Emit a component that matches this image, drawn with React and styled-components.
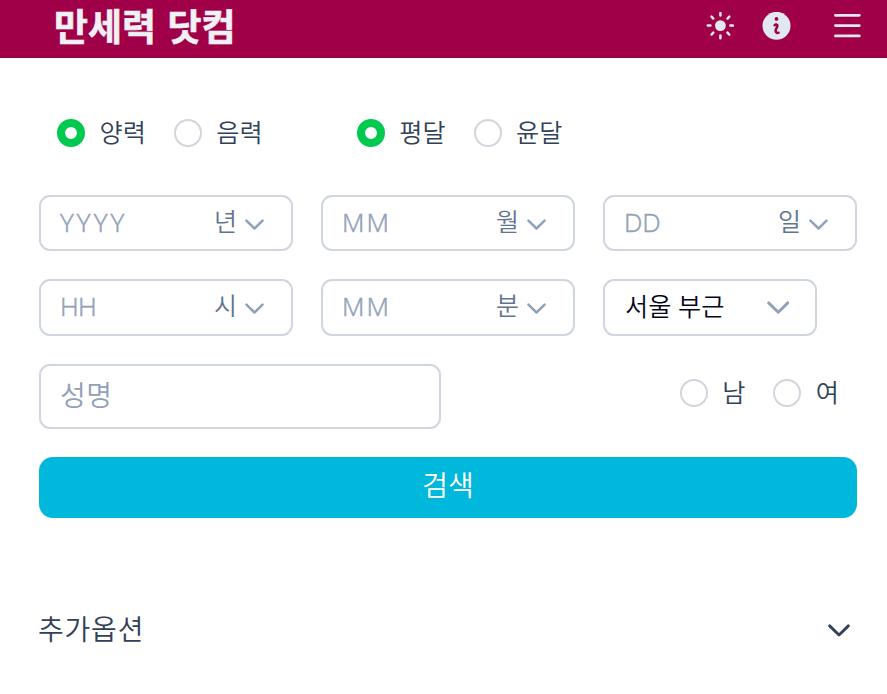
import React, { useState } from "react";
import styled, { createGlobalStyle } from "styled-components";

const GlobalStyle = createGlobalStyle`
  * {
    box-sizing: border-box;
  }

  body {
    margin: 0;
    background: #fff;
    color: #314158;
    font-family: "Noto Sans CJK KR", "Noto Sans", sans-serif;
    font-weight: 350;
  }

  input,
  button {
    font: inherit;
  }
`;

const dateFields = [
  { name: "year", placeholder: "YYYY", unit: "년", spacing: 3.1 },
  { name: "month", placeholder: "MM", unit: "월", spacing: 2 },
  { name: "day", placeholder: "DD", unit: "일" },
];

const timeFields = [
  { name: "hour", placeholder: "HH", unit: "시", spacing: -0.6 },
  { name: "minute", placeholder: "MM", unit: "분", spacing: 2 },
];

function SunIcon() {
  const angles = [0, 45, 90, 135, 180, 225, 270, 315];
  return (
    <svg width="28" height="28" viewBox="0 0 28 28" fill="none">
      <circle cx="14.4" cy="13.6" r="5.4" fill="currentColor" />
      {angles.map((angle) => (
        <path
          key={angle}
          d="M14.4 1v2.6"
          stroke="currentColor"
          strokeWidth="2.5"
          strokeLinecap="round"
          transform={`rotate(${angle} 14.4 13.6)`}
        />
      ))}
    </svg>
  );
}

function InfoIcon() {
  return (
    <svg width="29" height="28" viewBox="0 0 29 28" fill="none">
      <circle cx="14.5" cy="13.8" r="14" fill="currentColor" />
      <circle cx="14.5" cy="6.9" r="1.9" fill="#a00047" />
      <path
        d="M12.6 13.2c.9-1.1 3.1-.8 2.8.8-.2 1.3-1.8 3-1.8 4.7 0 1.8 1.6 2.6 3 2"
        stroke="#a00047"
        strokeWidth="2.5"
        strokeLinecap="round"
      />
    </svg>
  );
}

function MenuIcon() {
  return (
    <svg width="28" height="26" viewBox="0 0 28 26" fill="none">
      <path
        d="M2.4 2.3h24M2.4 12.6h24M2.4 22.9h24"
        stroke="currentColor"
        strokeWidth="2.7"
        strokeLinecap="round"
      />
    </svg>
  );
}

function Chevron({ width = 19, weight = 2.6 }) {
  return (
    <svg width={width} height={width * 0.6} viewBox="0 0 20 12" fill="none">
      <path
        d="M1.5 1.7 10 10l8.5-8.3"
        stroke="currentColor"
        strokeWidth={weight}
        strokeLinecap="round"
        strokeLinejoin="round"
      />
    </svg>
  );
}

function RadioOption({ name, value, selected, onSelect }) {
  return (
    <RadioLabel>
      <RadioInput
        type="radio"
        name={name}
        checked={selected === value}
        onChange={() => onSelect(value)}
      />
      <RadioText>{value}</RadioText>
    </RadioLabel>
  );
}

function UnitField({ name, placeholder, unit, spacing }) {
  return (
    <Field>
      <FieldInput name={name} placeholder={placeholder} $spacing={spacing} />
      <Unit>{unit}</Unit>
      <Chevron />
    </Field>
  );
}

export default function App() {
  const [calendar, setCalendar] = useState("양력");
  const [month, setMonth] = useState("평달");
  const [gender, setGender] = useState("");

  return (
    <>
      <GlobalStyle />
      <Header>
        <Title>만세력 닷컴</Title>
        <HeaderActions>
          <IconButton aria-label="테마">
            <SunIcon />
          </IconButton>
          <IconButton aria-label="정보" $gap={28}>
            <InfoIcon />
          </IconButton>
          <IconButton aria-label="메뉴" $gap={42}>
            <MenuIcon />
          </IconButton>
        </HeaderActions>
      </Header>

      <Form onSubmit={(e) => e.preventDefault()}>
        <CalendarRow>
          <RadioGroup>
            {["양력", "음력"].map((value) => (
              <RadioOption
                key={value}
                name="calendar"
                value={value}
                selected={calendar}
                onSelect={setCalendar}
              />
            ))}
          </RadioGroup>
          <RadioGroup>
            {["평달", "윤달"].map((value) => (
              <RadioOption
                key={value}
                name="month-type"
                value={value}
                selected={month}
                onSelect={setMonth}
              />
            ))}
          </RadioGroup>
        </CalendarRow>

        <FieldGrid>
          {dateFields.map((field) => (
            <UnitField key={field.name} {...field} />
          ))}
        </FieldGrid>

        <FieldGrid>
          {timeFields.map((field) => (
            <UnitField key={field.name} {...field} />
          ))}
          <RegionSelect type="button">
            <span>서울 부근</span>
            <Chevron width={22.5} />
          </RegionSelect>
        </FieldGrid>

        <NameRow>
          <NameInput name="name" placeholder="성명" />
          <RadioGroup>
            {["남", "여"].map((value) => (
              <RadioOption
                key={value}
                name="gender"
                value={value}
                selected={gender}
                onSelect={setGender}
              />
            ))}
          </RadioGroup>
        </NameRow>

        <SearchButton type="submit">검색</SearchButton>

        <MoreOptions type="button">
          <span>추가옵션</span>
          <Chevron width={22} weight={2.6} />
        </MoreOptions>
      </Form>
    </>
  );
}

const Header = styled.header`
  height: 58px;
  padding: 0 26px 7px 54px;
  display: flex;
  align-items: center;
  justify-content: space-between;
  background: #a00047;
  color: #f1f0f5;
`;

const Title = styled.h1`
  margin: 0 0 2px;
  font-size: 37px;
  line-height: 48px;
  font-weight: 700;
  word-spacing: 3px;
  -webkit-text-stroke: 0.6px currentColor;
`;

const HeaderActions = styled.div`
  display: flex;
  align-items: center;
  color: #e2e8f0;
`;

const IconButton = styled.button`
  margin: 0 0 0 ${(p) => p.$gap || 0}px;
  padding: 0;
  border: 0;
  display: flex;
  background: none;
  color: inherit;
`;

const Form = styled.form`
  padding: 52px 30px 0 39px;
`;

const CalendarRow = styled.div`
  height: 46px;
  padding-left: 18px;
  margin-bottom: 39px;
  display: flex;
  gap: 94px;
`;

const RadioGroup = styled.div`
  display: flex;
  align-items: center;
  gap: 28px;
`;

const RadioLabel = styled.label`
  display: flex;
  align-items: center;
  gap: 14.5px;
  font-size: 25.2px;
  line-height: 42px;
`;

const RadioText = styled.span`
  padding-bottom: 4px;
`;

const RadioInput = styled.input`
  appearance: none;
  width: 28px;
  height: 28px;
  margin: 0;
  border: 2px solid #d1d5dc;
  border-radius: 50%;
  background: #fff;

  &:checked {
    border: 8.5px solid #00c950;
  }
`;

const FieldGrid = styled.div`
  display: grid;
  grid-template-columns: repeat(3, 254px);
  gap: 28px;
  margin-bottom: 28px;
`;

const Field = styled.div`
  height: 56.25px;
  padding: 0 27px 0 19px;
  display: flex;
  align-items: center;
  border: 2px solid #d0d6e0;
  border-radius: 11px;
  color: #90a1b9;

  svg {
    margin-top: 3px;
  }
`;

const FieldInput = styled.input`
  flex: 1;
  min-width: 0;
  height: 46px;
  padding: 0 0 3px;
  border: 0;
  background: none;
  font-family: "Open Sans", "Noto Sans CJK KR", sans-serif;
  font-weight: 300;
  font-size: 26px;
  letter-spacing: ${(p) => p.$spacing || 0}px;
  -webkit-text-stroke: 0.5px #90a1b9;

  &::placeholder {
    color: #90a1b9;
  }
`;

const Unit = styled.span`
  margin-right: 8px;
  padding-bottom: 6px;
  color: #62748e;
  font-size: 25px;
  line-height: 42px;
`;

const RegionSelect = styled.button`
  width: 214px;
  height: 56.25px;
  padding: 0 26px 4px 20px;
  display: flex;
  align-items: center;
  justify-content: space-between;
  border: 2px solid #d0d6e0;
  border-radius: 11px;
  background: #fff;
  color: #020618;
  font-size: 25.2px;
  word-spacing: 1px;

  svg {
    margin-top: 5px;
    color: #90a1b9;
  }
`;

const NameRow = styled.div`
  margin: 28.5px 0 28px;
  padding-right: 18px;
  display: flex;
  justify-content: space-between;

  ${RadioGroup} {
    padding-bottom: 8px;
  }
`;

const NameInput = styled.input`
  width: 402px;
  height: 65px;
  padding: 0 19px 5px;
  border: 2px solid #d0d6e0;
  border-radius: 11px;
  font-size: 28px;
  letter-spacing: 0.6px;

  &::placeholder {
    color: #90a1b9;
  }
`;

const SearchButton = styled.button`
  width: 100%;
  height: 61px;
  padding: 0 0 7px;
  border: 0;
  border-radius: 14px;
  background: #00b8db;
  color: #fff;
  font-size: 28px;
`;

const MoreOptions = styled.button`
  width: 100%;
  height: 50px;
  margin-top: 87px;
  padding: 0 7px 3px 0;
  display: flex;
  align-items: center;
  justify-content: space-between;
  border: 0;
  background: none;
  color: #314158;
  font-size: 28px;
  letter-spacing: 0.8px;

  span {
    margin-left: -1px;
    padding-bottom: 1px;
  }

  svg {
    margin-top: 5px;
  }
`;
